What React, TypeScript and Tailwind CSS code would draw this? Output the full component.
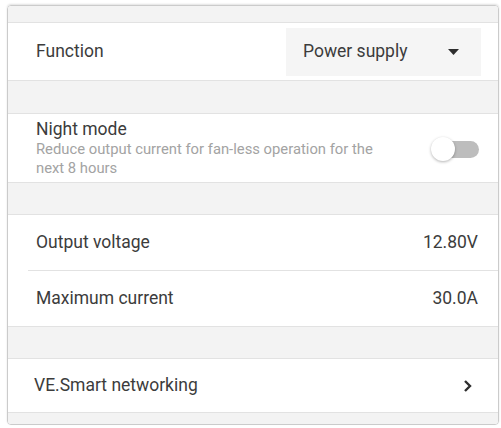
const font = { fontFamily: "Roboto, 'Liberation Sans', sans-serif" };

function Band({ className = "" }: { className?: string }) {
  return <div className={`bg-[#f3f3f3] border-b border-[#e2e2e2] ${className}`} />;
}

function ValueRow({ label, value }: { label: string; value: string }) {
  return (
    <div className="flex h-full items-center justify-between pl-7 pr-5">
      <span className="text-[17.5px] text-[#3c3c3c]">{label}</span>
      <span className="text-[17.5px] text-[#3c3c3c]">{value}</span>
    </div>
  );
}

export default function App() {
  return (
    <div className="min-h-screen bg-white pl-[7px] pt-[5px]" style={font}>
      <div className="flex h-[420px] w-[492px] flex-col overflow-hidden rounded-[4px] border border-[#cbcbcb] shadow-[0_-1px_2px_rgba(0,0,0,0.12)]">
        <Band className="h-[17px] shrink-0" />

        {/* Function */}
        <div className="flex h-[58px] shrink-0 items-center justify-between border-b border-[#e2e2e2] pl-7 pr-[17px]">
          <span className="text-[17.5px] text-[#3c3c3c]">Function</span>
          <div className="flex h-[48px] w-[195px] items-center justify-between bg-[#f5f5f5] pl-[17px] pr-[22px]">
            <span className="text-[17.5px] text-[#3c3c3c]">Power supply</span>
            <svg width="11" height="6" viewBox="0 0 11 6" aria-hidden>
              <path d="M0 0h11L5.5 6Z" fill="#2e2e2e" />
            </svg>
          </div>
        </div>

        <Band className="h-[33px] shrink-0" />

        {/* Night mode */}
        <div className="flex h-[69px] shrink-0 items-center justify-between border-b border-[#e2e2e2] pl-7 pr-[19px]">
          <div className="flex flex-col">
            <span className="text-[17.5px] leading-[21px] text-[#3c3c3c]">Night mode</span>
            <span className="w-[360px] text-[14.8px] leading-[19px] text-[#a3a3a3]">
              Reduce output current for fan-less operation for the next 8 hours
            </span>
          </div>
          <div className="relative mt-[2px] flex h-[24px] w-[48px] items-center justify-end">
            <div className="h-[17px] w-[38px] rounded-full bg-[#bdbdbd]" />
            <div className="absolute left-0 top-0 h-[24px] w-[24px] rounded-full bg-white shadow-[0_1px_3px_rgba(0,0,0,0.3)]" />
          </div>
        </div>

        <Band className="h-[32px] shrink-0" />

        {/* Output voltage / Maximum current */}
        <div className="h-[55px] shrink-0">
          <ValueRow label="Output voltage" value="12.80V" />
        </div>
        <div className="ml-5 h-px shrink-0 bg-[#e2e2e2]" />
        <div className="h-[56px] shrink-0 border-b border-[#e2e2e2]">
          <ValueRow label="Maximum current" value="30.0A" />
        </div>

        <Band className="h-[32px] shrink-0" />

        {/* VE.Smart networking */}
        <div className="flex h-[54px] shrink-0 items-center justify-between border-b border-[#e2e2e2] pl-[26px] pr-[26px]">
          <span className="text-[17.5px] text-[#3c3c3c]">VE.Smart networking</span>
          <svg width="9" height="14" viewBox="0 0 9 14" aria-hidden>
            <path d="M2 2l5 5-5 5" fill="none" stroke="#2e2e2e" strokeWidth="2.4" />
          </svg>
        </div>

        <div className="flex-1 bg-[#f3f3f3]" />
      </div>
    </div>
  );
}
